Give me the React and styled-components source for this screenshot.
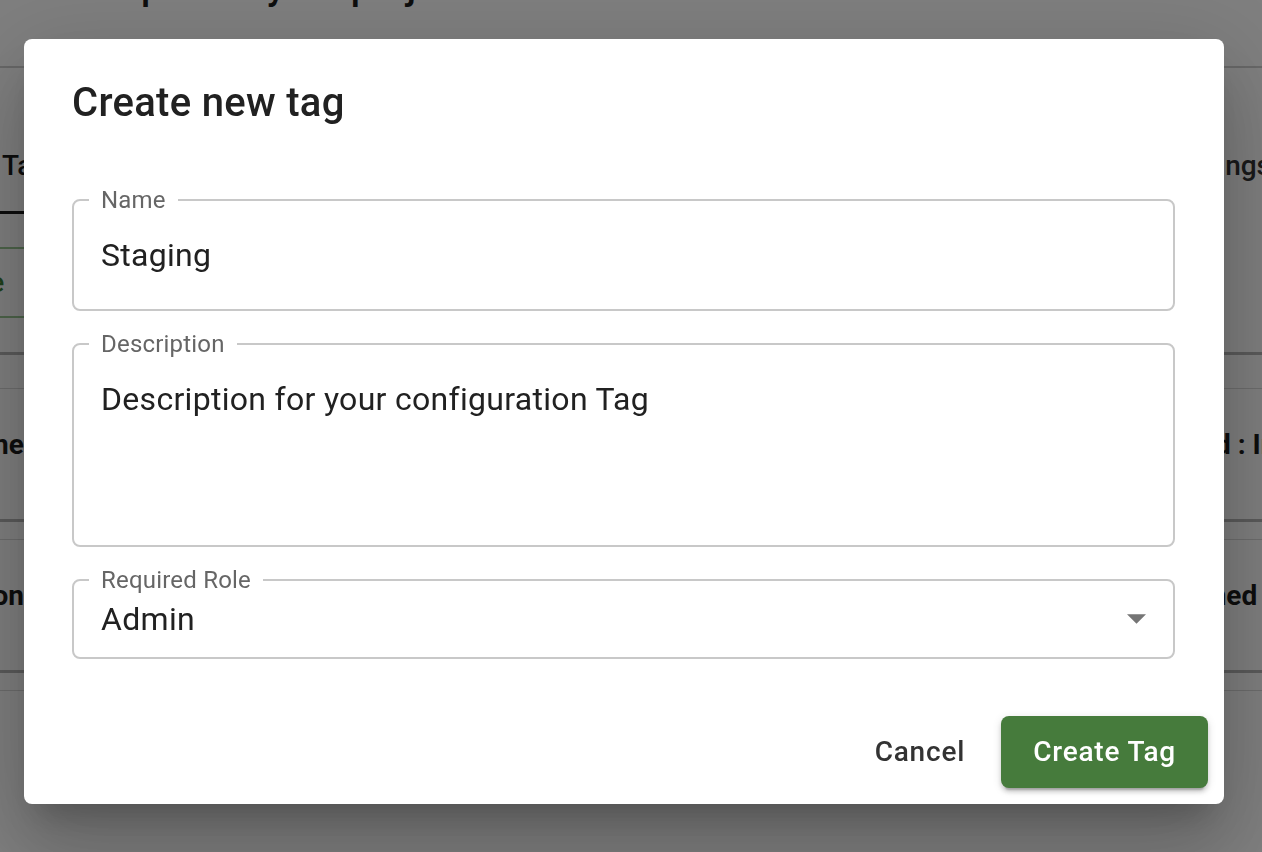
import React from 'react';
import styled, { createGlobalStyle } from 'styled-components';

const GlobalStyle = createGlobalStyle`
  html, body {
    margin: 0;
    height: 100%;
    overflow: hidden;
  }

  body {
    font-family: Roboto, "Noto Sans", "Liberation Sans", sans-serif;
    background: #fff;
    color: #1b1b1b;
  }
`;

const rows = [
  { label: 'Name', value: 'Production', meta: 'Created : Invalid Date' },
  { label: 'Description', value: 'Main configuration', meta: 'Published : Yes' },
];

const App = () => {
  return (
    <>
      <GlobalStyle />
      <Page>
        <Heading>Help track your project</Heading>
        <Divider />
        <TabRow>
          <Tab $active>Tags</Tab>
          <Tab>Settings</Tab>
        </TabRow>
        <Toolbar>
          <OutlineAction>Create</OutlineAction>
        </Toolbar>
        <CardList>
          {rows.map(row => (
            <Card key={row.label}>
              <CardRow>
                <CardLabel>{row.label}</CardLabel>
                <CardValue>{row.value}</CardValue>
                <CardMeta>{row.meta}</CardMeta>
              </CardRow>
            </Card>
          ))}
          <Card $empty />
        </CardList>
      </Page>

      <Backdrop>
        <Dialog role="dialog" aria-labelledby="create-tag-title">
          <DialogTitle id="create-tag-title">Create new tag</DialogTitle>
          <Form>
            <Field $bottom={31}>
              <Legend>Name</Legend>
              <Value $top={20}>Staging</Value>
            </Field>
            <Field $bottom={123}>
              <Legend>Description</Legend>
              <Value $top={20}>Description for your configuration Tag</Value>
            </Field>
            <Field $bottom={15}>
              <Legend>Required Role</Legend>
              <SelectRow>
                <Value $top={0}>Admin</Value>
                <Caret viewBox="0 0 10 5" aria-hidden="true">
                  <path d="M0 0l5 5 5-5z" />
                </Caret>
              </SelectRow>
            </Field>
          </Form>
          <Actions>
            <Button type="button">Cancel</Button>
            <Button type="button" $contained>
              Create Tag
            </Button>
          </Actions>
        </Dialog>
      </Backdrop>
    </>
  );
};

export default App;

/* page behind the dialog */

const Page = styled.div`
  display: flow-root;
  height: 852px;
  overflow: hidden;
`;

const Heading = styled.h1`
  margin: -36px 0 0;
  padding-left: 84px;
  font-size: 38px;
  line-height: 44px;
  font-weight: 500;
  white-space: nowrap;
  color: #1b1b1b;
`;

const Divider = styled.div`
  height: 2px;
  margin-top: 58px;
  background: #cfcfcf;
`;

const TabRow = styled.div`
  display: flex;
  justify-content: space-between;
  margin: 0 -41px 0 -30px;
  padding-top: 80px;
`;

const Tab = styled.div`
  padding: 0 32px 28px;
  font-size: 28px;
  line-height: 35px;
  font-weight: 500;
  white-space: nowrap;
  color: ${props => (props.$active ? '#1a1a1a' : '#333')};
  border-bottom: 3px solid ${props => (props.$active ? '#1a1a1a' : 'transparent')};
`;

const Toolbar = styled.div`
  padding: 33px 0 34px;
  border-bottom: 3px solid #b6b6b6;
`;

const OutlineAction = styled.div`
  display: flex;
  align-items: center;
  box-sizing: border-box;
  height: 71px;
  width: 500px;
  margin-left: -110px;
  padding-left: 30px;
  border: 2px solid #9bc994;
  border-radius: 8px;
  font-size: 28px;
  font-weight: 500;
  color: #3f7f37;
`;

const CardList = styled.div`
  display: flex;
  flex-direction: column;
  gap: 17px;
  padding-top: 33px;
`;

const Card = styled.div`
  border-top: 1px solid #dadada;
  border-bottom: 3px solid #b6b6b6;
  min-height: ${props => (props.$empty ? '200px' : '130px')};
`;

const CardRow = styled.div`
  display: grid;
  grid-template-columns: 254px 1108px 300px;
  margin-left: -230px;
  padding-top: 39px;
  font-size: 28px;
  line-height: 34px;
  font-weight: 700;
  white-space: nowrap;
  color: #1b1b1b;
`;

const CardLabel = styled.div`
  text-align: right;
`;

const CardValue = styled.div`
  padding-left: 40px;
  font-weight: 400;
`;

const CardMeta = styled.div``;

/* dialog */

const Backdrop = styled.div`
  position: fixed;
  inset: 0;
  display: flex;
  align-items: flex-start;
  padding: 39px 0 0 24px;
  background: rgba(0, 0, 0, 0.5);
`;

const Dialog = styled.div`
  display: flex;
  flex-direction: column;
  width: 1200px;
  background: #fff;
  border-radius: 8px;
  box-shadow: 0 22px 30px -14px rgba(0, 0, 0, 0.2), 0 48px 76px 6px rgba(0, 0, 0, 0.14),
    0 18px 92px 16px rgba(0, 0, 0, 0.12);
`;

const DialogTitle = styled.h2`
  margin: 0;
  padding: 32px 49px 0 48px;
  font-size: 40px;
  line-height: 64px;
  font-weight: 500;
  letter-spacing: 0.3px;
  color: #212121;
`;

const Form = styled.div`
  display: flex;
  flex-direction: column;
  gap: 21px;
  padding: 53px 49px 41px 48px;
`;

const Field = styled.fieldset`
  margin: 0;
  min-width: 0;
  padding: 0 27px ${props => props.$bottom}px 27px;
  border: 2px solid #c8c8c8;
  border-radius: 8px;
`;

const Legend = styled.legend`
  margin-left: -12px;
  padding: 0 12px;
  font-size: 24px;
  line-height: 24px;
  letter-spacing: 0.2px;
  color: #666;
`;

const Value = styled.div`
  padding-top: ${props => props.$top}px;
  font-size: 32px;
  line-height: 46px;
  letter-spacing: 0.3px;
  color: #212121;
`;

const SelectRow = styled.div`
  display: flex;
  align-items: center;
  justify-content: space-between;
  padding-top: 4px;
`;

const Caret = styled.svg`
  width: 19px;
  height: 10px;
  fill: #757575;
`;

const Actions = styled.div`
  display: flex;
  justify-content: flex-end;
  align-items: center;
  gap: 20px;
  padding: 16px;
`;

const Button = styled.button`
  padding: 12px ${props => (props.$contained ? '32px' : '16px')};
  border: none;
  border-radius: 8px;
  font-family: Roboto, "Noto Sans", sans-serif;
  font-size: 28px;
  line-height: 48px;
  font-weight: 500;
  letter-spacing: 0.8px;
  cursor: pointer;
  color: ${props => (props.$contained ? '#fff' : '#333')};
  background: ${props => (props.$contained ? '#467b3c' : 'transparent')};
  box-shadow: ${props =>
    props.$contained
      ? '0 6px 2px -4px rgba(0,0,0,0.2), 0 4px 4px 0 rgba(0,0,0,0.14), 0 2px 10px 0 rgba(0,0,0,0.12)'
      : 'none'};
`;
